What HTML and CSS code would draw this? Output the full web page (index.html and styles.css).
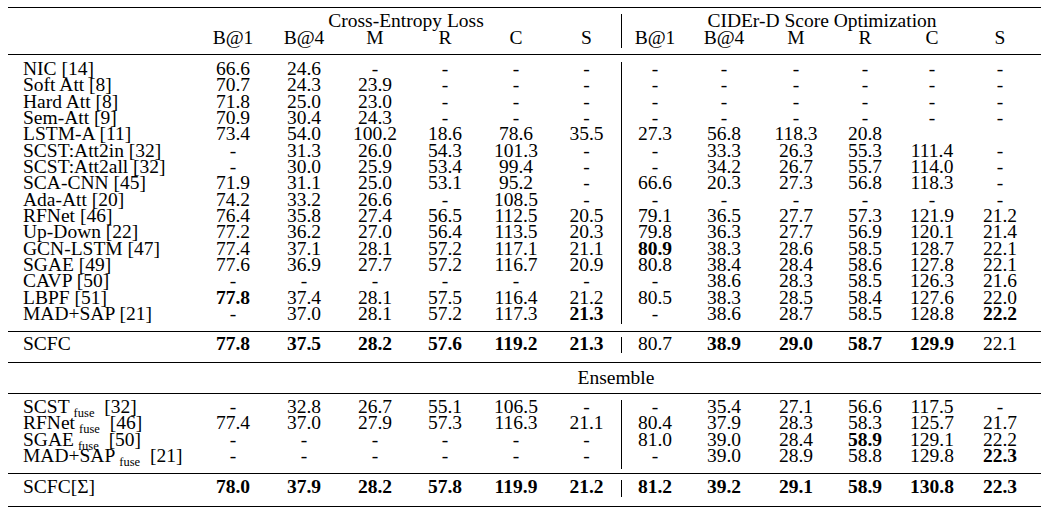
FILE: index.html
```html
<!DOCTYPE html>
<html>
<head>
<meta charset="utf-8">
<link rel="stylesheet" href="styles.css">
</head>
<body>
<div class="tbl">
  <div class="rule"></div>
  <div class="head">
    <div class="row hrow"><span class="lbl"></span><span class="ce">Cross-Entropy Loss</span><span class="cd vl">CIDEr-D Score Optimization</span></div>
    <div class="row hrow2"><span class="lbl"></span><span>B@1</span><span>B@4</span><span>M</span><span>R</span><span>C</span><span>S</span><span class="vl">B@1</span><span>B@4</span><span>M</span><span>R</span><span>C</span><span>S</span></div>
  </div>
  <div class="rule r-head"></div>
  <div class="group g-main">
    <div class="row"><span class="lbl">NIC [14]</span><span>66.6</span><span>24.6</span><span>-</span><span>-</span><span>-</span><span>-</span><span class="vl">-</span><span>-</span><span>-</span><span>-</span><span>-</span><span>-</span></div>
    <div class="row"><span class="lbl">Soft Att [8]</span><span>70.7</span><span>24.3</span><span>23.9</span><span>-</span><span>-</span><span>-</span><span class="vl">-</span><span>-</span><span>-</span><span>-</span><span>-</span><span>-</span></div>
    <div class="row"><span class="lbl">Hard Att [8]</span><span>71.8</span><span>25.0</span><span>23.0</span><span>-</span><span>-</span><span>-</span><span class="vl">-</span><span>-</span><span>-</span><span>-</span><span>-</span><span>-</span></div>
    <div class="row"><span class="lbl">Sem-Att [9]</span><span>70.9</span><span>30.4</span><span>24.3</span><span>-</span><span>-</span><span>-</span><span class="vl">-</span><span>-</span><span>-</span><span>-</span><span>-</span><span>-</span></div>
    <div class="row"><span class="lbl">LSTM-A [11]</span><span>73.4</span><span>54.0</span><span>100.2</span><span>18.6</span><span>78.6</span><span>35.5</span><span class="vl">27.3</span><span>56.8</span><span>118.3</span><span>20.8</span><span></span><span></span></div>
    <div class="row"><span class="lbl">SCST:Att2in [32]</span><span>-</span><span>31.3</span><span>26.0</span><span>54.3</span><span>101.3</span><span>-</span><span class="vl">-</span><span>33.3</span><span>26.3</span><span>55.3</span><span>111.4</span><span>-</span></div>
    <div class="row"><span class="lbl">SCST:Att2all [32]</span><span>-</span><span>30.0</span><span>25.9</span><span>53.4</span><span>99.4</span><span>-</span><span class="vl">-</span><span>34.2</span><span>26.7</span><span>55.7</span><span>114.0</span><span>-</span></div>
    <div class="row"><span class="lbl">SCA-CNN [45]</span><span>71.9</span><span>31.1</span><span>25.0</span><span>53.1</span><span>95.2</span><span>-</span><span class="vl">66.6</span><span>20.3</span><span>27.3</span><span>56.8</span><span>118.3</span><span>-</span></div>
    <div class="row"><span class="lbl">Ada-Att [20]</span><span>74.2</span><span>33.2</span><span>26.6</span><span>-</span><span>108.5</span><span>-</span><span class="vl">-</span><span>-</span><span>-</span><span>-</span><span>-</span><span>-</span></div>
    <div class="row"><span class="lbl">RFNet [46]</span><span>76.4</span><span>35.8</span><span>27.4</span><span>56.5</span><span>112.5</span><span>20.5</span><span class="vl">79.1</span><span>36.5</span><span>27.7</span><span>57.3</span><span>121.9</span><span>21.2</span></div>
    <div class="row"><span class="lbl">Up-Down [22]</span><span>77.2</span><span>36.2</span><span>27.0</span><span>56.4</span><span>113.5</span><span>20.3</span><span class="vl">79.8</span><span>36.3</span><span>27.7</span><span>56.9</span><span>120.1</span><span>21.4</span></div>
    <div class="row"><span class="lbl">GCN-LSTM [47]</span><span>77.4</span><span>37.1</span><span>28.1</span><span>57.2</span><span>117.1</span><span>21.1</span><span class="vl b">80.9</span><span>38.3</span><span>28.6</span><span>58.5</span><span>128.7</span><span>22.1</span></div>
    <div class="row"><span class="lbl">SGAE [49]</span><span>77.6</span><span>36.9</span><span>27.7</span><span>57.2</span><span>116.7</span><span>20.9</span><span class="vl">80.8</span><span>38.4</span><span>28.4</span><span>58.6</span><span>127.8</span><span>22.1</span></div>
    <div class="row"><span class="lbl">CAVP [50]</span><span>-</span><span>-</span><span>-</span><span>-</span><span>-</span><span>-</span><span class="vl">-</span><span>38.6</span><span>28.3</span><span>58.5</span><span>126.3</span><span>21.6</span></div>
    <div class="row"><span class="lbl">LBPF [51]</span><span class="b">77.8</span><span>37.4</span><span>28.1</span><span>57.5</span><span>116.4</span><span>21.2</span><span class="vl">80.5</span><span>38.3</span><span>28.5</span><span>58.4</span><span>127.6</span><span>22.0</span></div>
    <div class="row"><span class="lbl">MAD+SAP [21]</span><span>-</span><span>37.0</span><span>28.1</span><span>57.2</span><span>117.3</span><span class="b">21.3</span><span class="vl">-</span><span>38.6</span><span>28.7</span><span>58.5</span><span>128.8</span><span class="b">22.2</span></div>
  </div>
  <div class="rule r-main"></div>
  <div class="row g-scfc"><span class="lbl">SCFC</span><span class="b">77.8</span><span class="b">37.5</span><span class="b">28.2</span><span class="b">57.6</span><span class="b">119.2</span><span class="b">21.3</span><span class="vl">80.7</span><span class="b">38.9</span><span class="b">29.0</span><span class="b">58.7</span><span class="b">129.9</span><span>22.1</span></div>
  <div class="rule r-scfc"></div>
  <div class="row g-enslabel"><span class="lbl"></span><span class="ens">Ensemble</span></div>
  <div class="rule r-enslabel"></div>
  <div class="group g-ens">
    <div class="row"><span class="lbl">SCST<span class="sub">fuse</span> [32]</span><span>-</span><span>32.8</span><span>26.7</span><span>55.1</span><span>106.5</span><span>-</span><span class="vl">-</span><span>35.4</span><span>27.1</span><span>56.6</span><span>117.5</span><span>-</span></div>
    <div class="row"><span class="lbl">RFNet<span class="sub">fuse</span> [46]</span><span>77.4</span><span>37.0</span><span>27.9</span><span>57.3</span><span>116.3</span><span>21.1</span><span class="vl">80.4</span><span>37.9</span><span>28.3</span><span>58.3</span><span>125.7</span><span>21.7</span></div>
    <div class="row"><span class="lbl">SGAE<span class="sub">fuse</span> [50]</span><span>-</span><span>-</span><span>-</span><span>-</span><span>-</span><span>-</span><span class="vl">81.0</span><span>39.0</span><span>28.4</span><span class="b">58.9</span><span>129.1</span><span>22.2</span></div>
    <div class="row"><span class="lbl">MAD+SAP<span class="sub">fuse</span> [21]</span><span>-</span><span>-</span><span>-</span><span>-</span><span>-</span><span>-</span><span class="vl">-</span><span>39.0</span><span>28.9</span><span>58.8</span><span>129.8</span><span class="b">22.3</span></div>
  </div>
  <div class="rule r-ens"></div>
  <div class="row g-sigma"><span class="lbl">SCFC[Σ]</span><span class="b">78.0</span><span class="b">37.9</span><span class="b">28.2</span><span class="b">57.8</span><span class="b">119.9</span><span class="b">21.2</span><span class="vl b">81.2</span><span class="b">39.2</span><span class="b">29.1</span><span class="b">58.9</span><span class="b">130.8</span><span class="b">22.3</span></div>
  <div class="rule r-sigma"></div>
</div>
</body>
</html>
```

FILE: styles.css
```css
* {
  box-sizing: border-box;
}

body {
  margin: 0;
  padding: 7px 0 0 8px;
  background: #fff;
  color: #000;
  font-family: "Liberation Serif", "Times New Roman", serif;
  font-size: 19.5px;
}

.tbl {
  width: 1033px;
  display: flex;
  flex-direction: column;
}

.rule {
  height: 1px;
  background: #000;
  flex: none;
}

.row {
  display: grid;
  grid-template-columns: 190px 70px 72px 70px 70px 72px 69px 67px 72px 72px 66px 68px 68px;
  height: 16.35px;
  line-height: 13px;
  flex: none;
}

.row > span {
  text-align: center;
  white-space: nowrap;
}

.row > .lbl {
  text-align: left;
  padding-left: 15px;
}

.row > .vl {
  border-left: 1px solid #000;
}

.b {
  font-weight: bold;
}

.head {
  margin-top: 6px;
}

.hrow {
  height: 16.5px;
}

.hrow2 {
  height: 17.5px;
}

.ce {
  grid-column: 2 / 8;
  padding-right: 7px;
}

.row > .cd {
  grid-column: 8 / 14;
  padding-right: 12px;
}

.ens {
  grid-column: 2 / 14;
}

.sub {
  font-size: 12.5px;
  vertical-align: -4px;
  margin: 0 5px 0 4px;
}

.r-head { margin-top: 6px; }
.g-main { margin-top: 7px; }
.r-main { margin-top: 7.4px; }
.g-scfc { margin-top: 5px; }
.r-scfc { margin-top: 8.65px; }
.g-enslabel { margin-top: 8px; }
.r-enslabel { margin-top: 5.35px; }
.g-ens { margin-top: 6.3px; }
.r-ens { margin-top: 7.6px; }
.g-sigma { margin-top: 6.5px; }
.r-sigma { margin-top: 8.85px; }
```
